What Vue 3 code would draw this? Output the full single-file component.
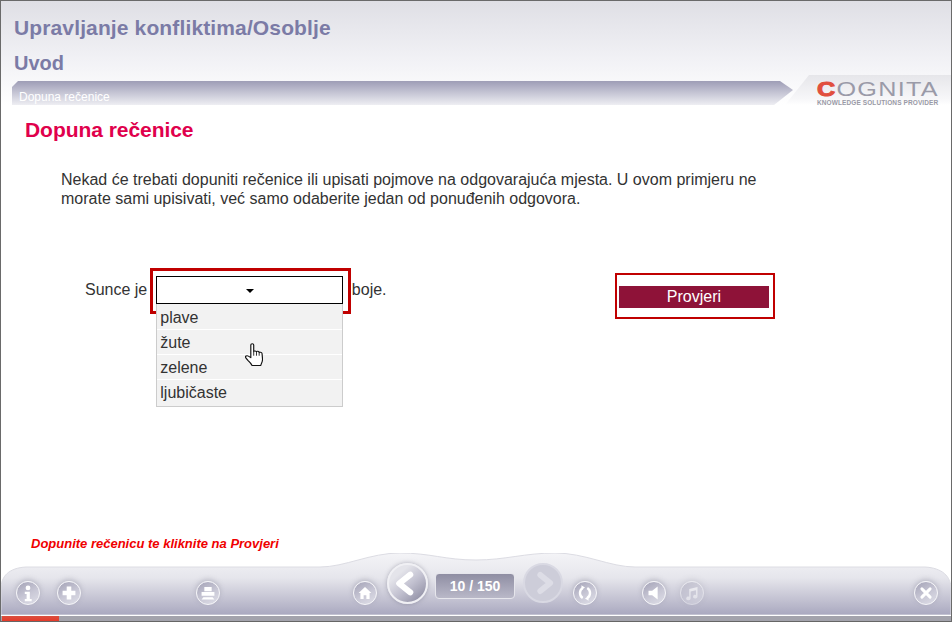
<template>
  <div class="page">
    <header class="head">
      <h1 class="course">Upravljanje konfliktima/Osoblje</h1>
      <h2 class="module">Uvod</h2>
      <div class="strip">
        <div class="band"><span>Dopuna rečenice</span></div>
        <div class="logo">
          <div class="word"><b>C</b>OGNITA</div>
          <div class="tag">KNOWLEDGE SOLUTIONS PROVIDER</div>
        </div>
      </div>
    </header>

    <main class="body">
      <h3 class="title">Dopuna rečenice</h3>
      <p class="intro">Nekad će trebati dopuniti rečenice ili upisati pojmove na odgovarajuća mjesta. U ovom primjeru ne morate sami upisivati, već samo odaberite jedan od ponuđenih odgovora.</p>
      <div class="exercise">
        <div class="sentence">
          <span class="before">Sunce je</span>
          <div class="red-frame">
            <div class="select"><i class="caret"></i></div>
            <ul class="options">
              <li v-for="o in options" :key="o">{{ o }}</li>
            </ul>
            <svg class="hand" width="18" height="23" viewBox="0.5 0.5 15.5 23.5" preserveAspectRatio="none">
              <path d="M5.500 15.500V2.600C5.500 .9 8 .9 8 2.600V9.500C8 8.200 10.400 8.200 10.400 9.800C10.400 8.600 12.700 8.600 12.700 10.400C12.700 9.500 15.200 9.600 15.200 11.500L15.600 17C15.700 19.500 14.700 21 14 23.500H6.600C5.800 21.400 4.600 20 3.200 18.500L1.200 15.700C.2 14 2.200 12.800 3.400 14Z" fill="#fff" stroke="#111" stroke-width="1" stroke-linejoin="round"/>
              <path d="M8 9.500V13.500M10.400 9.800V13.500M12.700 10.400V13.500" stroke="#111" stroke-width=".8" fill="none"/>
            </svg>
          </div>
          <span class="after">boje.</span>
        </div>
        <div class="check-frame"><button class="check">Provjeri</button></div>
      </div>
      <p class="hint">Dopunite rečenicu te kliknite na Provjeri</p>
    </main>

    <footer class="foot">
      <svg class="shape" width="952" height="62" viewBox="0 0 952 62">
        <defs>
          <linearGradient id="bar" x1="0" y1="0" x2="0" y2="1">
            <stop offset="0" stop-color="#f4f4f7"/>
            <stop offset=".4" stop-color="#e6e6ec"/>
            <stop offset=".72" stop-color="#c6c5d4"/>
            <stop offset="1" stop-color="#a9a8bf"/>
          </linearGradient>
        </defs>
        <path d="M1 62V36C1 23 9 15 26 14H320C345 14 370 0 400 0C430 0 445 7 476 7C505 7 525 0 555 0C585 0 610 14 635 14H925C942 15 951 23 951 36V62Z" fill="url(#bar)" stroke="#dcdce3" stroke-width="1"/>
      </svg>
      <div class="tools">
        <button class="ico m16">
          <svg viewBox="0 0 24 24"><circle cx="12" cy="6.500" r="2.600"/><path d="M8.500 10.500h5.500v8h2v2.500H8.500v-2.500h2v-5.500h-2z"/></svg>
        </button>
        <button class="ico m17">
          <svg viewBox="0 0 24 24"><path d="M9.500 5h5v4.500H19v5h-4.500V19h-5v-4.500H5v-5h4.500z"/></svg>
        </button>
        <button class="ico m115">
          <svg viewBox="0 0 24 24"><path d="M8 5.500h8v4.500H8zM5 11h14v4H5zM7 16.500h10l2 2.500H5z"/></svg>
        </button>
        <button class="ico m133">
          <svg viewBox="0 0 24 24"><path d="M12 5.500l7 6.500h-2v6.500h-3.500v-4h-3v4H7V12H5z"/></svg>
        </button>
        <button class="nav nav-on">
          <svg viewBox="0 0 40 40"><path d="M23 10.500L11 20l12 9.500" fill="none" stroke="#fff" stroke-width="6.500" stroke-linecap="round" stroke-linejoin="round"/></svg>
        </button>
        <div class="count">10 / 150</div>
        <button class="nav nav-off">
          <svg viewBox="0 0 40 40"><path d="M17 11l11 9-11 9" fill="none" stroke="#dddde6" stroke-width="6.500" stroke-linecap="round" stroke-linejoin="round"/></svg>
        </button>
        <button class="ico m10">
          <svg viewBox="0 0 24 24"><path d="M9.500 6.500C5.500 9 5.500 15 9.500 17.500M14.500 6.500C18.500 9 18.500 15 14.500 17.500" fill="none" stroke="#fff" stroke-width="2.600"/><path d="M8 3.500l4 2.500-3.500 2.500zM16 20.500l-4-2.500 3.500-2.500z"/></svg>
        </button>
        <button class="ico m45">
          <svg viewBox="0 0 24 24"><path d="M6 9.500h4L16 5v14l-6-4.500H6z"/></svg>
        </button>
        <button class="ico m14 ico-off">
          <svg viewBox="0 0 24 24"><path d="M9 7.500L18 5.500v10.500a2.400 2 0 1 1-1.600-1.900V9L10.500 10.300v7.700a2.400 2 0 1 1-1.500-1.900z"/></svg>
        </button>
        <button class="ico m210">
          <svg viewBox="0 0 24 24"><path d="M7.500 7.500l9 9M16.500 7.500l-9 9" fill="none" stroke="#fff" stroke-width="3.200" stroke-linecap="round"/></svg>
        </button>
      </div>
      <div class="progress"><div class="done"></div></div>
    </footer>
  </div>
</template>

<script setup>
const options = ['plave', 'žute', 'zelene', 'ljubičaste']
</script>

<style>
html, body { margin: 0; background: #fff; overflow: hidden; }
</style>

<style scoped>
.page {
  width: 952px;
  height: 622px;
  box-sizing: border-box;
  display: flex;
  flex-direction: column;
  border-top: 1px solid #6a6a6a;
  border-left: 1px solid #6a6a6a;
  border-right: 1px solid #6a6a6a;
  font-family: "Liberation Sans", Arial, sans-serif;
  color: #333;
  background: #fff;
  overflow: hidden;
}
.head {
  height: 104px;
  flex: none;
  box-sizing: border-box;
  padding: 15px 0 0 13px;
  background: linear-gradient(#dfdfe5, #f1f1f5 55%, #fff 100%);
  display: flex;
  flex-direction: column;
}
.course, .module {
  margin: 0;
  font-size: 20px;
  line-height: 24px;
  font-weight: bold;
  color: #7b7ba6;
}
.course { font-size: 21px; letter-spacing: .13px; }
.module { margin-top: 11px; }
.strip {
  margin: 6px 0 0 -2px;
  display: flex;
  height: 24px;
  position: relative;
}
.band {
  width: 781px;
  height: 24px;
  box-sizing: border-box;
  padding: 9px 0 0 7px;
  color: #fff;
  font-size: 12px;
  line-height: 15px;
  background: linear-gradient(#9e9db6, #d2d2de 65%, #eeeef3);
  clip-path: polygon(6px 0, 768px 0, 781px 9px, 762px 24px, 0 24px, 0 6px);
}
.logo {
  position: absolute;
  left: 773px;
  top: -6px;
  width: 167px;
  height: 30px;
  box-sizing: border-box;
  padding: 0 0 0 32px;
  background: linear-gradient(#e6e6ea, #f7f7f9 80%, #fff);
  clip-path: polygon(24px 0, 100% 0, 100% 100%, 0 100%);
}
.word {
  font-size: 20px;
  line-height: 20px;
  margin-top: 4px;
  color: #9a9aa8;
  letter-spacing: 1px;
  white-space: nowrap;
  transform: scaleX(1.26);
  transform-origin: left center;
}
.word b { color: #e14f3e; font-weight: bold; -webkit-text-stroke: 1px #e14f3e; }
.tag {
  font-size: 6.500px;
  font-weight: bold;
  line-height: 7px;
  letter-spacing: .1px;
  color: #9a9aa6;
  white-space: nowrap;
}
.body {
  flex: 1;
  min-height: 0;
  display: flex;
  flex-direction: column;
  padding-left: 24px;
}
.title {
  margin: 12px 0 0;
  font-size: 21px;
  letter-spacing: -.05px;
  line-height: 26px;
  font-weight: bold;
  color: #e0004c;
}
.intro {
  margin: 27px 0 0 36px;
  width: 720px;
  font-size: 16px;
  line-height: 19px;
  color: #333;
}
.exercise {
  margin-top: 60px;
  display: flex;
  align-items: flex-start;
  height: 268px;
}
.sentence {
  margin-left: 60px;
  display: flex;
  align-items: flex-start;
  font-size: 16px;
  line-height: 20px;
  color: #333;
}
.before { margin: 12px 3px 0 0; }
.after { margin: 12px 0 0 .6px; }
.red-frame {
  position: relative;
  width: 201px;
  height: 46px;
  box-sizing: border-box;
  border: 3px solid #c00000;
}
.select {
  position: absolute;
  left: 3px;
  top: 5px;
  width: 187px;
  height: 28px;
  box-sizing: border-box;
  border: 1px solid #000;
  background: #fff;
  display: flex;
  align-items: center;
  justify-content: center;
}
.caret {
  width: 0;
  height: 0;
  margin-top: 2px;
  border-left: 4px solid transparent;
  border-right: 4px solid transparent;
  border-top: 4px solid #000;
}
.options {
  position: absolute;
  left: 3px;
  top: 33px;
  width: 187px;
  box-sizing: border-box;
  margin: 0;
  padding: 1px 0 1px;
  list-style: none;
  background: #f2f2f2;
  border: 1px solid #ccc;
  border-top: 0;
}
.options li {
  height: 25px;
  box-sizing: border-box;
  padding-left: 3px;
  line-height: 25px;
  border-bottom: 1px solid #fff;
}
.options li:last-child { border-bottom: 0; }
.hand {
  position: absolute;
  left: 92px;
  top: 72px;
}
.check-frame {
  margin-left: 228.4px;
  margin-top: 5px;
  width: 160px;
  height: 46px;
  box-sizing: border-box;
  border: 2px solid #c00000;
  padding: 11px 0 0 2px;
}
.check {
  display: block;
  width: 150px;
  height: 22px;
  border: 0;
  padding: 0;
  background: #8e1238;
  color: #fff;
  font: 16px/22px "Liberation Sans", Arial, sans-serif;
}
.hint {
  margin: 0 0 0 6px;
  font-size: 13px;
  line-height: 16px;
  font-weight: bold;
  font-style: italic;
  color: #f00000;
}
.foot {
  position: relative;
  height: 69px;
  flex: none;
  margin: 0 -1px;
}
.shape {
  position: absolute;
  left: 0;
  top: 0;
  display: block;
}
.tools {
  position: relative;
  display: flex;
  align-items: flex-start;
  height: 62px;
  box-sizing: border-box;
  padding-top: 28px;
}
.ico {
  width: 24px;
  height: 24px;
  padding: 0;
  flex: none;
  box-sizing: border-box;
  border: 1.500px solid #f6f6f9;
  border-radius: 50%;
  background: linear-gradient(150deg, #a3a2b6, #c9c8d6 55%, #dfdfe8);
  box-shadow: 0 -2px 5px rgba(120,120,140,.35);
}
.ico svg { display: block; width: 100%; height: 100%; fill: #fff; }
.ico-off { opacity: .5; }
.m16 { margin-left: 16px; }
.m17 { margin-left: 17px; }
.m115 { margin-left: 115px; }
.m133 { margin-left: 133px; }
.m10 { margin-left: 10px; }
.m45 { margin-left: 45px; }
.m14 { margin-left: 14px; }
.m210 { margin-left: 210px; }
.nav {
  padding: 0;
  flex: none;
  margin-top: -18px;
  box-sizing: border-box;
  border: 2px solid #f0f0f4;
  border-radius: 50%;
}
.nav svg { display: block; width: 100%; height: 100%; }
.nav-on {
  width: 41px;
  height: 41px;
  margin-left: 10px;
  background: linear-gradient(140deg, #e4e4ea 25%, #c2c1d0 55%, #85849a);
  box-shadow: 0 0 4px rgba(110,110,130,.5);
}
.nav-off {
  width: 40px;
  height: 40px;
  margin-left: 8px;
  background: #cdcdd9;
  border-color: #d9d9e3;
}
.count {
  margin-left: 7px;
  margin-top: -8px;
  width: 80px;
  height: 26px;
  box-sizing: border-box;
  border: 1px solid #e6e6ec;
  border-radius: 4px;
  background: linear-gradient(#8f8ea3, #b9b8c8);
  color: #fff;
  font-size: 14px;
  line-height: 24px;
  font-weight: bold;
  text-align: center;
}
.progress {
  box-sizing: border-box;
  height: 7px;
  border-top: 1px solid #fff;
  border-bottom: 1px solid #666;
  background: #a3a3ac;
  position: absolute;
  left: 1px;
  right: 1px;
  top: 62px;
}
.done {
  margin-left: 1px;
  width: 57px;
  height: 5px;
  background: linear-gradient(#d9503f, #e63a2a);
}
</style>
